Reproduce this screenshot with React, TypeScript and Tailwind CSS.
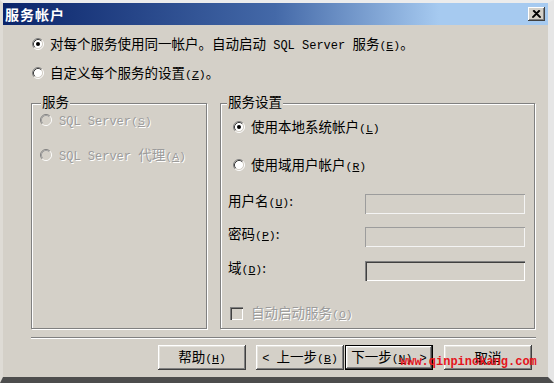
import React from "react";

const CJK = "font-['Noto_Sans_CJK_SC','Liberation_Sans',sans-serif]";
const MONO = "font-['Liberation_Mono','Noto_Sans_CJK_SC',monospace]";

function M({ children }: { children: React.ReactNode }) {
  return <span className={`${MONO} text-[12px]`}>{children}</span>;
}

function Key({ k }: { k: string }) {
  return (
    <span className={`${MONO} text-[11.5px]`}>
      (<span className="underline underline-offset-1">{k}</span>)
    </span>
  );
}

function Radio({ checked = false, disabled = false }: { checked?: boolean; disabled?: boolean }) {
  return (
    <svg width="12" height="12" viewBox="0 0 12 12" className="shrink-0">
      <circle cx="6" cy="6" r="4.5" fill={disabled ? "#d4d0c8" : "#ffffff"} />
      <path d="M2.11 9.89 A5.5 5.5 0 0 1 9.89 2.11" fill="none" stroke="#808080" strokeWidth="1" />
      <path d="M9.89 2.11 A5.5 5.5 0 0 1 2.11 9.89" fill="none" stroke="#ffffff" strokeWidth="1" />
      <path d="M2.82 9.18 A4.5 4.5 0 0 1 9.18 2.82" fill="none" stroke={disabled ? "#a0a0a0" : "#404040"} strokeWidth="1" />
      <path d="M9.18 2.82 A4.5 4.5 0 0 1 2.82 9.18" fill="none" stroke="#d4d0c8" strokeWidth="1" />
      {checked && <circle cx="6" cy="6" r="2" fill={disabled ? "#808080" : "#000000"} />}
    </svg>
  );
}

function Btn({ children, def = false }: { children: React.ReactNode; def?: boolean }) {
  return (
    <div
      className={`w-[88px] h-[25px] flex items-center justify-center bg-[#d4d0c8] text-black leading-none ${
        def
          ? "border border-black shadow-[inset_-1px_-1px_0_#404040,inset_1px_1px_0_#ffffff,inset_-2px_-2px_0_#808080,inset_2px_2px_0_#e4e2dc]"
          : "shadow-[inset_-1px_-1px_0_#404040,inset_1px_1px_0_#ffffff,inset_-2px_-2px_0_#808080,inset_2px_2px_0_#e4e2dc]"
      }`}
    >
      <span className="whitespace-pre">{children}</span>
    </div>
  );
}

export default function App() {
  const disabledText = "text-[#9c9c9c] [text-shadow:1px_1px_0_#ffffff]";
  return (
    <div
      className={`relative w-[554px] h-[383px] overflow-hidden bg-[#d4d0c8] border-l-[3px] border-t-[3px] border-r-[6px] border-b-[6px] border-l-[#dedbd5] border-t-[#ececec] border-r-[#e6e6e6] border-b-[#4d4d4d] flex flex-col ${CJK} text-[13.5px] text-black`}
    >
      {/* Title bar */}
      <div className="h-[22px] shrink-0 flex items-center justify-between bg-[linear-gradient(to_right,#0a246a,#4469a8_50%,#a6caf0_80%)]">
        <span className="pl-[2px] text-white font-bold text-[14px] tracking-[1px] leading-none">服务帐户</span>
        <div className="mr-[3px] w-[17px] h-[14px] bg-[#d4d0c8] flex items-center justify-center shadow-[inset_-1px_-1px_0_#404040,inset_1px_1px_0_#ffffff,inset_-2px_-2px_0_#808080]">
          <svg width="9" height="8" viewBox="0 0 9 8">
            <path d="M1 0.5 L8 7.5 M8 0.5 L1 7.5 M2 0.5 L9 7.5 M7 0.5 L0 7.5" stroke="#000" strokeWidth="1.2" />
          </svg>
        </div>
      </div>

      {/* Body */}
      <div className="flex flex-col pl-[28px]">
        <div className="mt-[10px] h-[18px] pl-[1px] flex items-center leading-[18px]">
          <Radio checked />
          <span className="ml-[6px] whitespace-pre">
            对每个服务使用同一帐户。自动启动<M> SQL Server </M>服务<Key k="E" />。
          </span>
        </div>
        <div className="mt-[11px] h-[18px] pl-[1px] flex items-center leading-[18px]">
          <Radio />
          <span className="ml-[6px] whitespace-pre">
            自定义每个服务的设置<Key k="Z" />。
          </span>
        </div>

        <div className="mt-[21px] flex gap-[13px] h-[226px]">
          {/* Left group */}
          <div className="relative w-[176px] h-[226px] border border-[#808080] shadow-[1px_1px_0_#ffffff,inset_1px_1px_0_#ffffff] flex flex-col pl-[8px]">
            <span className="absolute left-[9px] -top-[11px] px-[1px] bg-[#d4d0c8] leading-[16px]">服务</span>
            <div className="mt-[7px] h-[18px] flex items-center">
              <Radio disabled />
              <span className={`ml-[7px] whitespace-pre ${disabledText}`}>
                <M>SQL Server</M>
                <Key k="S" />
              </span>
            </div>
            <div className="mt-[17px] h-[18px] flex items-center">
              <Radio disabled />
              <span className={`ml-[7px] whitespace-pre ${disabledText}`}>
                <M>SQL Server </M>代理<Key k="A" />
              </span>
            </div>
          </div>

          {/* Right group */}
          <div className="relative w-[315px] h-[226px] border border-[#808080] shadow-[1px_1px_0_#ffffff,inset_1px_1px_0_#ffffff] flex flex-col">
            <span className="absolute left-[6px] -top-[11px] px-[1px] bg-[#d4d0c8] leading-[16px]">服务设置</span>
            <div className="mt-[14px] h-[18px] pl-[12px] flex items-center">
              <Radio checked />
              <span className="ml-[6px] whitespace-pre">
                使用本地系统帐户<Key k="L" />
              </span>
            </div>
            <div className="mt-[20px] h-[18px] pl-[12px] flex items-center">
              <Radio />
              <span className="ml-[6px] whitespace-pre">
                使用域用户帐户<Key k="R" />
              </span>
            </div>
            <div className="mt-[18px] h-[22px] pl-[7px] pr-[9px] flex items-start">
              <span className="flex-1 leading-[16px] whitespace-pre">
                用户名<Key k="U" />:
              </span>
              <div className="mt-[2px] w-[160px] h-[20px] bg-[#d4d0c8] shadow-[inset_1px_1px_0_#9c9c9c,inset_-1px_-1px_0_#f4f4f4]" />
            </div>
            <div className="mt-[11px] h-[22px] pl-[7px] pr-[9px] flex items-start">
              <span className="flex-1 leading-[16px] whitespace-pre">
                密码<Key k="P" />:
              </span>
              <div className="mt-[2px] w-[160px] h-[20px] bg-[#d4d0c8] shadow-[inset_1px_1px_0_#9c9c9c,inset_-1px_-1px_0_#f4f4f4]" />
            </div>
            <div className="mt-[12px] h-[22px] pl-[7px] pr-[9px] flex items-start">
              <span className="flex-1 leading-[16px] whitespace-pre">
                域<Key k="D" />:
              </span>
              <div className="mt-[2px] w-[160px] h-[20px] bg-[#d4d0c8] shadow-[inset_1px_1px_0_#808080,inset_2px_2px_0_#404040,inset_-1px_-1px_0_#ffffff,inset_-2px_-2px_0_#d4d0c8]" />
            </div>
            <div className="mt-[23px] h-[18px] pl-[9px] flex items-center">
              <div className="w-[13px] h-[13px] shrink-0 bg-[#d4d0c8] shadow-[inset_1px_1px_0_#808080,inset_2px_2px_0_#404040,inset_-1px_-1px_0_#ffffff,inset_-2px_-2px_0_#d4d0c8]" />
              <span className={`ml-[8px] whitespace-pre ${disabledText}`}>
                自动启动服务<Key k="O" />
              </span>
            </div>
          </div>
        </div>

        {/* Separator */}
        <div className="mt-[8px] w-[505px] h-[2px] border-t border-t-[#808080] border-b border-b-white" />

        {/* Buttons */}
        <div className="mt-[6px] w-[505px] pr-[4px] flex justify-end">
          <Btn>
            帮助<Key k="H" />
          </Btn>
          <div className="ml-[10px]">
            <Btn>
              <M>{"< "}</M>上一步<Key k="B" />
            </Btn>
          </div>
          <div className="ml-[1px]">
            <Btn def>
              下一步<Key k="N" />
              <M>{" >"}</M>
            </Btn>
          </div>
          <div className="ml-[11px]">
            <Btn>取消</Btn>
          </div>
        </div>
      </div>

      {/* Watermark */}
      <span className={`absolute left-[397px] top-[352px] ${MONO} text-[12px] font-bold leading-[14px] text-[#e4141c] whitespace-nowrap`}>
        www.qinpinokang.com
      </span>
    </div>
  );
}
